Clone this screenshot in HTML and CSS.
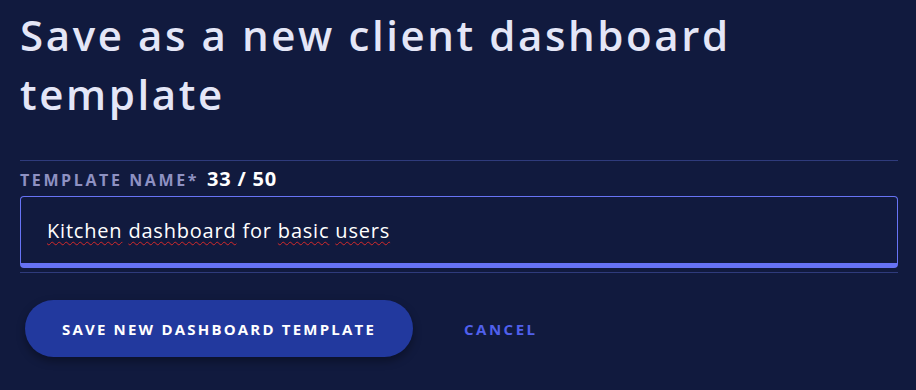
FILE: index.html
```html
<!DOCTYPE html>
<html lang="en">
<head>
<meta charset="utf-8">
<link rel="stylesheet" href="styles.css">
</head>
<body>
<div class="dialog">
  <h1 class="title">Save as a new client dashboard template</h1>
  <div class="field">
    <div class="label-row">
      <span class="label">TEMPLATE NAME*</span>
      <span class="count">33 / 50</span>
    </div>
    <div class="input"><span class="squiggle">Kitchen</span> <span class="squiggle">dashboard</span> for <span class="squiggle">basic</span> <span class="squiggle">users</span></div>
  </div>
  <div class="actions">
    <button class="btn-primary">SAVE NEW DASHBOARD TEMPLATE</button>
    <button class="btn-link">CANCEL</button>
  </div>
</div>
</body>
</html>
```
FILE: styles.css
```css
html, body {
  margin: 0;
  padding: 0;
  background: #111a3e;
  height: 100%;
}
body {
  font-family: "Open Sans", "DejaVu Sans", sans-serif;
  color: #e6e8f8;
}
.dialog {
  padding: 5px 18px 0 20px;
}
.title {
  margin: 0;
  font-size: 42px;
  font-weight: 600;
  line-height: 59px;
  letter-spacing: 2.6px;
  color: #e4e6f7;
  max-width: 800px;
}
.field {
  margin-top: 37px;
  border-top: 1px solid #2f3b7c;
  border-bottom: 1px solid #2f3b7c;
  padding-bottom: 4px;
}
.label-row {
  display: flex;
  align-items: baseline;
  gap: 8px;
  padding-top: 4px;
  height: 35px;
  box-sizing: border-box;
}
.label {
  font-size: 16px;
  font-weight: 700;
  letter-spacing: 2.6px;
  color: #8e91c2;
}
.count {
  font-size: 20px;
  font-weight: 700;
  letter-spacing: 0.8px;
  color: #ffffff;
}
.input {
  height: 72px;
  box-sizing: border-box;
  border: 1px solid #6773f5;
  border-bottom: 5px solid #6773f5;
  border-radius: 4px;
  padding: 20px 26px 0;
  font-size: 20px;
  letter-spacing: 0.8px;
  color: #ffffff;
}
.squiggle {
  text-decoration: underline wavy #d42a2a;
  text-decoration-thickness: 1px;
  text-underline-offset: 3px;
}
.actions {
  display: flex;
  align-items: center;
  margin-top: 27px;
  padding-left: 5px;
  gap: 51px;
}
.btn-primary {
  height: 57px;
  width: 388px;
  border: none;
  border-radius: 29px;
  background: #22399e;
  color: #ffffff;
  font-family: inherit;
  font-size: 15px;
  font-weight: 700;
  letter-spacing: 2.2px;
  padding: 0;
  box-shadow: 0 4px 8px rgba(0, 0, 0, 0.35);
}
.btn-link {
  border: none;
  background: none;
  color: #5060ec;
  font-family: inherit;
  font-size: 15px;
  font-weight: 700;
  letter-spacing: 2.5px;
  padding: 0;
}
```
